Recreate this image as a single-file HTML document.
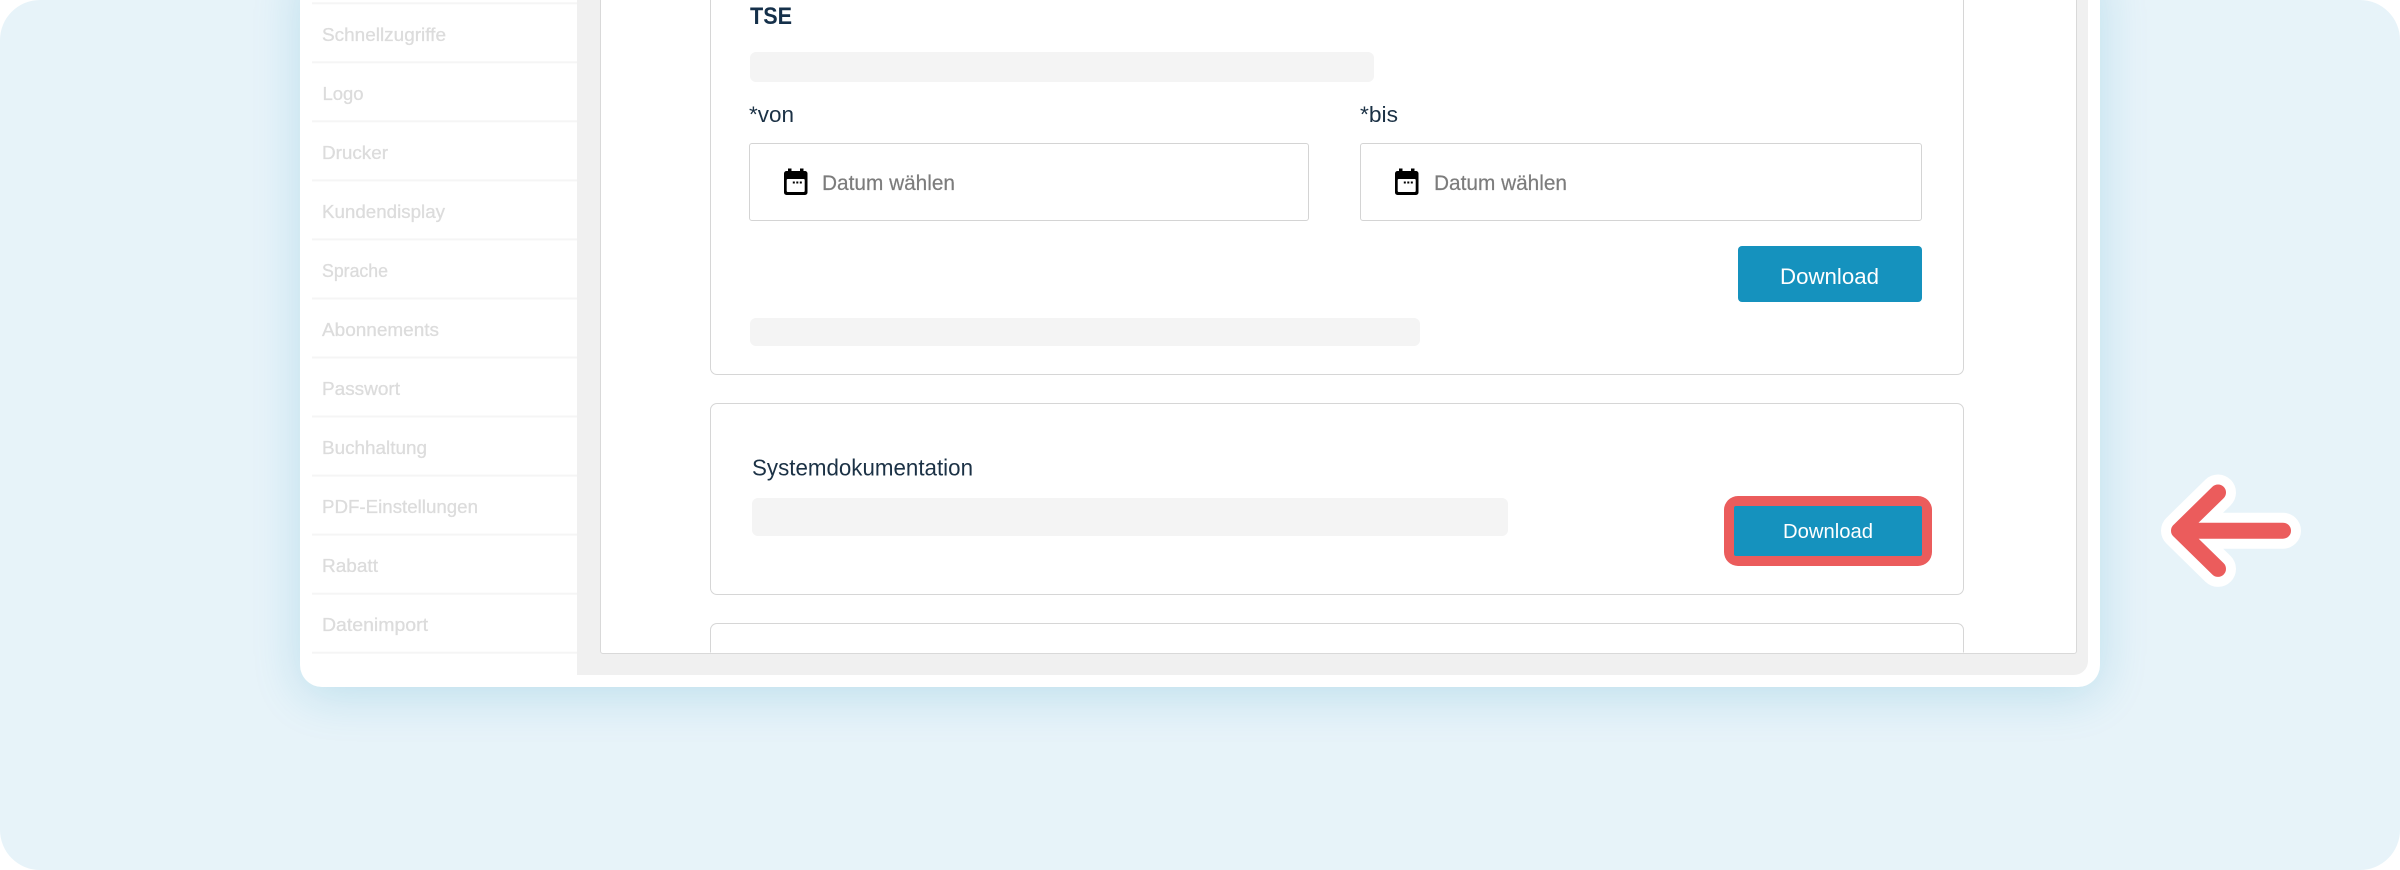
<!DOCTYPE html>
<html lang="de"><head><meta charset="utf-8"><title>TSE Systemdokumentation</title>
<style>
html,body{margin:0;padding:0;width:2400px;height:870px;overflow:hidden;background:#fff}
*{box-sizing:border-box}
.a{position:absolute}
#bg{left:0;top:0;width:2400px;height:870px;background:#e7f3f9;border-radius:40px;overflow:hidden}
#win{left:300px;top:-40px;width:1800px;height:727px;background:#fff;border-radius:22px;box-shadow:0 8px 48px rgba(21,146,190,.2)}
#gray{left:577px;top:-40px;width:1511px;height:715px;background:#f0f0f0;border-bottom-right-radius:14px}
#panel{left:600px;top:-40px;width:1477px;height:694px;background:#fff;border:1.5px solid #d9d9d9;border-radius:3px;overflow:hidden}
.card{background:#fff;border:1.5px solid #d6d6d6;border-radius:7px}
.sk{background:#f4f4f4;border-radius:6px}
.inp{background:#fff;border:1.5px solid #d4d4d4;border-radius:3px}
.btn{background:#1592be;border-radius:4px}
svg{position:absolute;left:0;top:0}
text{font-family:"Liberation Sans",sans-serif}
.s{font-size:18.5px;fill:#dcdcdc;stroke:#dcdcdc;stroke-width:.3px}
.d{font-size:21px;fill:#7c7c7c;stroke:#7c7c7c;stroke-width:.2px}
.l{font-size:22px;fill:#1b3145}
</style></head><body>
<div class="a" id="bg">
<div class="a" id="win"></div>
<div class="a" id="gray"></div>
<div class="a" id="panel"></div>
<div class="a card" style="left:710px;top:-30px;width:1254px;height:405px"></div>
<div class="a card" style="left:710px;top:403px;width:1254px;height:192px"></div>
<div class="a card" style="left:710px;top:623px;width:1254px;height:40px;border-bottom:0;clip-path:inset(0 0 10.5px 0)"></div>
<div class="a sk" style="left:750px;top:52px;width:624px;height:30px"></div>
<div class="a sk" style="left:750px;top:318px;width:670px;height:28px"></div>
<div class="a sk" style="left:752px;top:498px;width:756px;height:38px"></div>
<div class="a inp" style="left:749px;top:143px;width:560px;height:78px"></div>
<div class="a inp" style="left:1360px;top:143px;width:562px;height:78px"></div>
<div class="a btn" style="left:1738px;top:246px;width:184px;height:56px"></div>
<div class="a" style="left:1724px;top:496px;width:208px;height:70px;background:#eb5c5c;border-radius:14px"></div>
<div class="a" style="left:1734px;top:506px;width:188px;height:50px;background:#1592be;border-radius:2px"></div>
<svg width="2400" height="870" viewBox="0 0 2400 870">
<g fill="#f5f5f5">
<rect x="312" y="2.3" width="265" height="2"/><rect x="312" y="61.3" width="265" height="2"/><rect x="312" y="120.3" width="265" height="2"/><rect x="312" y="179.4" width="265" height="2"/><rect x="312" y="238.4" width="265" height="2"/><rect x="312" y="297.5" width="265" height="2"/><rect x="312" y="356.5" width="265" height="2"/><rect x="312" y="415.5" width="265" height="2"/><rect x="312" y="474.6" width="265" height="2"/><rect x="312" y="533.6" width="265" height="2"/><rect x="312" y="592.7" width="265" height="2"/><rect x="312" y="651.7" width="265" height="2"/>
</g>
<g>
<text class="s" x="322" y="41" textLength="124" lengthAdjust="spacingAndGlyphs">Schnellzugriffe</text>
<text class="s" x="322.5" y="100" textLength="41" lengthAdjust="spacingAndGlyphs">Logo</text>
<text class="s" x="322" y="159" textLength="66" lengthAdjust="spacingAndGlyphs">Drucker</text>
<text class="s" x="322" y="218" textLength="123" lengthAdjust="spacingAndGlyphs">Kundendisplay</text>
<text class="s" x="322" y="277" textLength="66" lengthAdjust="spacingAndGlyphs">Sprache</text>
<text class="s" x="322" y="336" textLength="117" lengthAdjust="spacingAndGlyphs">Abonnements</text>
<text class="s" x="322" y="395" textLength="78" lengthAdjust="spacingAndGlyphs">Passwort</text>
<text class="s" x="322" y="454" textLength="105" lengthAdjust="spacingAndGlyphs">Buchhaltung</text>
<text class="s" x="322" y="513" textLength="156" lengthAdjust="spacingAndGlyphs">PDF-Einstellungen</text>
<text class="s" x="322" y="572" textLength="56" lengthAdjust="spacingAndGlyphs">Rabatt</text>
<text class="s" x="322" y="631" textLength="106" lengthAdjust="spacingAndGlyphs">Datenimport</text>
</g>
<text x="750" y="24" font-size="24" font-weight="700" fill="#15304a" textLength="42" lengthAdjust="spacingAndGlyphs">TSE</text>
<text class="l" x="749" y="122" textLength="45" lengthAdjust="spacingAndGlyphs">*von</text>
<text class="l" x="1360" y="122" textLength="38" lengthAdjust="spacingAndGlyphs">*bis</text>
<text class="d" x="822" y="190" textLength="133" lengthAdjust="spacingAndGlyphs">Datum wählen</text>
<text class="d" x="1434" y="190" textLength="133" lengthAdjust="spacingAndGlyphs">Datum wählen</text>
<text x="1780" y="284" font-size="22.5" fill="#fff" textLength="99" lengthAdjust="spacingAndGlyphs">Download</text>
<text x="1783" y="538" font-size="20.5" fill="#fff" textLength="90" lengthAdjust="spacingAndGlyphs">Download</text>
<text x="752" y="475.5" font-size="23" fill="#1b3145" textLength="221" lengthAdjust="spacingAndGlyphs">Systemdokumentation</text>
<g>
<rect x="784" y="171" width="23.5" height="24" rx="2.5" fill="#000"/>
<rect x="788" y="168.5" width="3.5" height="5" fill="#000"/><rect x="800" y="168.5" width="3.5" height="5" fill="#000"/>
<rect x="786.7" y="179" width="18" height="13" rx="1" fill="#fff"/>
<rect x="792.8" y="181.5" width="2" height="2" fill="#000"/><rect x="796.3" y="181.5" width="2" height="2" fill="#000"/><rect x="799.8" y="181.5" width="2" height="2" fill="#000"/>
</g>
<g transform="translate(611 0)">
<rect x="784" y="171" width="23.5" height="24" rx="2.5" fill="#000"/>
<rect x="788" y="168.5" width="3.5" height="5" fill="#000"/><rect x="800" y="168.5" width="3.5" height="5" fill="#000"/>
<rect x="786.7" y="179" width="18" height="13" rx="1" fill="#fff"/>
<rect x="792.8" y="181.5" width="2" height="2" fill="#000"/><rect x="796.3" y="181.5" width="2" height="2" fill="#000"/><rect x="799.8" y="181.5" width="2" height="2" fill="#000"/>
</g>
<path d="M2283 530.7H2179M2218 492.5L2179 530.7L2218 568.9" fill="none" stroke="#fff" stroke-width="36" stroke-linecap="round" stroke-linejoin="round"/>
<path d="M2283 530.7H2179M2218 492.5L2179 530.7L2218 568.9" fill="none" stroke="#eb5c5c" stroke-width="16" stroke-linecap="round" stroke-linejoin="round"/>
</svg>
</div>
</body></html>
